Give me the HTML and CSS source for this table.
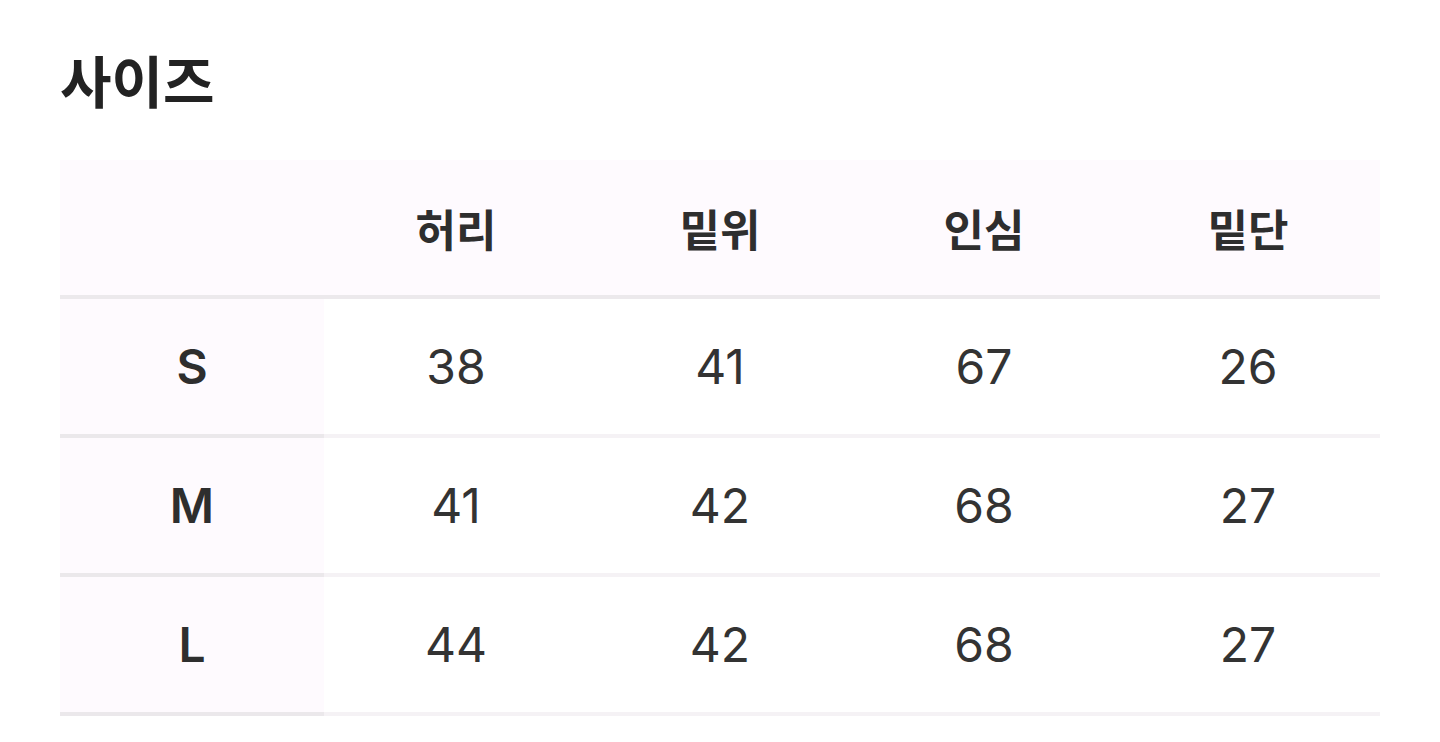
FILE: index.html
```html
<!DOCTYPE html>
<html lang="ko">
<head>
<meta charset="utf-8">
<link rel="stylesheet" href="styles.css">
</head>
<body>
<section class="size">
  <h2 class="title">사이즈</h2>
  <table class="chart">
    <thead>
      <tr>
        <th class="corner"></th>
        <th>허리</th>
        <th>밑위</th>
        <th>인심</th>
        <th>밑단</th>
      </tr>
    </thead>
    <tbody>
      <tr><th class="label">S</th><td>38</td><td>41</td><td>67</td><td>26</td></tr>
      <tr><th class="label">M</th><td>41</td><td>42</td><td>68</td><td>27</td></tr>
      <tr><th class="label">L</th><td>44</td><td>42</td><td>68</td><td>27</td></tr>
    </tbody>
  </table>
</section>
</body>
</html>
```
FILE: styles.css
```css
html, body {
  margin: 0;
  padding: 0;
  background: #ffffff;
}
body {
  font-family: Inter, "Noto Sans CJK KR", "Noto Sans", sans-serif;
  color: #333333;
}
.size {
  padding: 38px 60px 0 60px;
}
.title {
  margin: 0;
  font-family: "Noto Sans CJK KR", sans-serif;
  font-size: 56px;
  font-weight: 700;
  line-height: 82px;
  color: #222222;
}
.chart {
  margin-top: 40px;
  width: 1320px;
  border-collapse: collapse;
  table-layout: fixed;
}
.chart th, .chart td {
  width: 264px;
  height: 135px;
  padding: 0;
  text-align: center;
  vertical-align: middle;
  border-bottom: 4px solid #f5f2f5;
}
.chart thead th {
  background: #fefafe;
  font-family: "Noto Sans CJK KR", sans-serif;
  font-size: 44px;
  font-weight: 700;
  color: #2e2e2e;
  border-bottom-color: #ece9ec;
}
.chart td {
  font-family: Inter, sans-serif;
  font-size: 48px;
  font-weight: 400;
  color: #333333;
}
.chart .label {
  background: #fefafe;
  font-family: Inter, sans-serif;
  font-size: 48px;
  font-weight: 600;
  color: #2e2e2e;
  border-bottom-color: #ebe8eb;
}
```
